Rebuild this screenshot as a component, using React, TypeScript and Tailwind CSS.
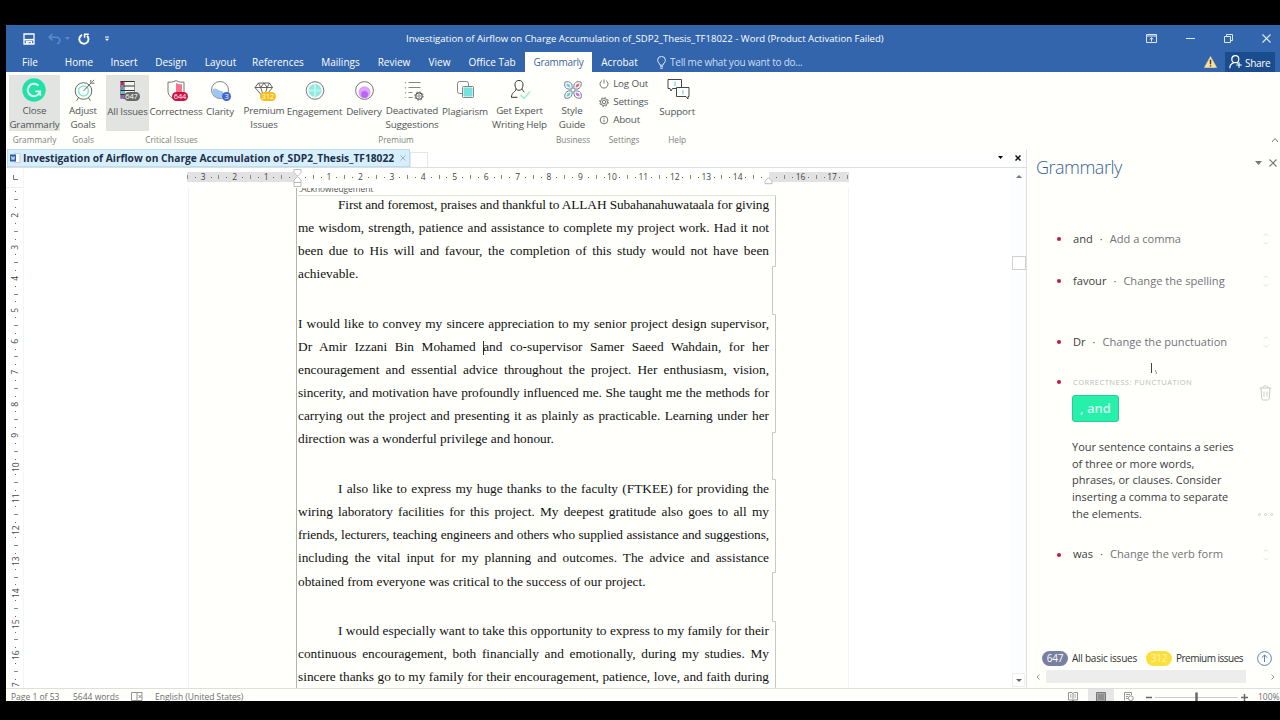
import type { ReactNode } from "react";
import { clsx } from "clsx";

const menuTabs = [
  { label: "File", width: "w-[48px]" },
  { label: "Home", width: "w-[50px]" },
  { label: "Insert", width: "w-[40px]" },
  { label: "Design", width: "w-[54px]" },
  { label: "Layout", width: "w-[45px]" },
  { label: "References", width: "w-[70px]" },
  { label: "Mailings", width: "w-[55px]" },
  { label: "Review", width: "w-[52px]" },
  { label: "View", width: "w-[39px]" },
  { label: "Office Tab", width: "w-[66px]" },
  { label: "Grammarly", width: "w-[67px]", active: true },
  { label: "Acrobat", width: "w-[55px]" },
];

// each paragraph is kept line by line, the way Word broke it
const paragraphs = [
  {
    indent: true,
    lines: [
      "First and foremost, praises and thankful to ALLAH Subahanahuwataala for giving",
      "me wisdom, strength, patience and assistance to complete my project work. Had it not",
      "been due to His will and favour, the completion of this study would not have been",
      "achievable.",
    ],
  },
  {
    indent: false,
    lines: [
      "I would like to convey my sincere appreciation to my senior project design supervisor,",
      "Dr Amir Izzani Bin Mohamed |and co-supervisor Samer Saeed Wahdain, for her",
      "encouragement and essential advice throughout the project. Her enthusiasm, vision,",
      "sincerity, and motivation have profoundly influenced me. She taught me the methods for",
      "carrying out the project and presenting it as plainly as practicable. Learning under her",
      "direction was a wonderful privilege and honour.",
    ],
  },
  {
    indent: true,
    lines: [
      "I also like to express my huge thanks to the faculty (FTKEE) for providing the",
      "wiring laboratory facilities for this project. My deepest gratitude also goes to all my",
      "friends, lecturers, teaching engineers and others who supplied assistance and suggestions,",
      "including the vital input for my planning and outcomes. The advice and assistance",
      "obtained from everyone was critical to the success of our project.",
    ],
  },
  {
    indent: true,
    open: true,
    lines: [
      "I would especially want to take this opportunity to express to my family for their",
      "continuous encouragement, both financially and emotionally, during my studies. My",
      "sincere thanks go to my family for their encouragement, patience, love, and faith during",
    ],
  },
];

const TitleBar = () => (
  <div className="relative flex h-[27px] items-center text-white">
    <svg className="ml-[17px]" width="12" height="12" viewBox="0 0 12 12" fill="none" stroke="white" strokeWidth="1.3">
      <path d="M1 1h10v10H1z" />
      <path d="M1 6.7h10" strokeWidth="1.6" />
      <path d="M3.5 11V8.6h5V11M5 9v2" />
    </svg>
    <svg className="ml-[13px]" width="13" height="12" viewBox="0 0 13 12" fill="none" stroke="#6288c6" strokeWidth="1.5">
      <path d="M4.5 1 1 4.2l3.5 3.2M1.3 4.2H8c5 0 5 5.6 1 6.6" />
    </svg>
    <svg className="ml-[4px]" width="5" height="3" viewBox="0 0 5 3" fill="#6288c6">
      <path d="M0 0h5L2.5 3z" />
    </svg>
    <svg className="ml-[7px]" width="13" height="12" viewBox="0 0 13 12" fill="none" stroke="white" strokeWidth="1.9">
      <path d="M5 1.9a4.6 4.6 0 1 0 5 .8" />
      <path d="M7.6 4.8V1.2h4.2" strokeWidth="1.6" />
    </svg>
    <svg className="ml-[15px]" width="4" height="6" viewBox="0 0 5 6" fill="white">
      <path d="M0 0h5v1.2H0zM0 2.8h5L2.5 5.6z" />
    </svg>
    <div className="absolute left-[400px] top-[6px] w-[480px] whitespace-nowrap text-[9.57px] leading-4">
      Investigation of Airflow on Charge Accumulation of_SDP2_Thesis_TF18022 - Word (Product Activation Failed)
    </div>
    <div className="ml-auto mr-[9px] flex items-center gap-[29px]">
      <svg width="11" height="9" viewBox="0 0 11 9" fill="none" stroke="#dbe9fb">
        <path d="M.5.5h10v8H.5zM.5 2h10" />
        <path d="M5.5 7.5V3.8M3.7 5.4l1.8-1.7 1.8 1.7" />
      </svg>
      <svg width="9" height="9" viewBox="0 0 9 9" stroke="#dbe9fb">
        <path d="M0 4.5h9" />
      </svg>
      <svg width="9" height="9" viewBox="0 0 9 9" fill="none" stroke="#dbe9fb">
        <path d="M.5 2.5h6v6h-6zM2.5 2.5v-2h6v6h-2" />
      </svg>
      <svg width="9" height="9" viewBox="0 0 9 9" stroke="#dbe9fb" strokeWidth="1.1">
        <path d="m.5.5 8 8M8.5.5l-8 8" />
      </svg>
    </div>
  </div>
);

const MenuBar = () => (
  <div className="flex h-5 items-stretch whitespace-nowrap text-[10px] leading-5 text-white">
    {menuTabs.map((tab) => (
      <div
        key={tab.label}
        className={clsx("flex justify-center", tab.width, tab.active && "bg-[#fffffc] tracking-[-0.3px] text-[#3f66a3]")}
      >
        {tab.label}
      </div>
    ))}
    <svg className="ml-[10px] mt-[4px]" width="9" height="13" viewBox="0 0 9 13" fill="none" stroke="#dbe9fb">
      <path d="M3 9.2C3 7.3.6 6.8.6 4.3a3.9 3.9 0 0 1 7.8 0C8.4 6.8 6 7.3 6 9.2zM3 10.8h3M3.4 12.3h2.2" />
    </svg>
    <span className="ml-[4px] tracking-[-0.23px] text-[#cfdff5]">Tell me what you want to do...</span>
    <svg className="ml-auto mt-[4px]" width="13" height="12" viewBox="0 0 13 12">
      <path d="M6.5.5 12.6 11.5H.4z" fill="#fbdf9b" stroke="#e9d9a5" strokeWidth=".6" />
      <path d="M6.5 3.8v4.4M6.5 9.2v1.2" stroke="#463a24" strokeWidth="1.4" />
    </svg>
    <div className="ml-[8px] mr-[5px] flex w-[50px] bg-[#1b4c8e]">
      <svg className="ml-[4px] mt-[3px]" width="14" height="14" viewBox="0 0 14 14" fill="none" stroke="white" strokeWidth="1.2">
        <circle cx="6.3" cy="4.2" r="3.5" />
        <path d="M.8 13.2c0-3 1.8-4.8 4.2-5.5M7.6 7.5l1.3 1M10 7.2v5.6M7.2 10h5.6" />
      </svg>
      <span className="ml-[2px] mt-px tracking-[-0.3px]">Share</span>
    </div>
  </div>
);

const Badge = ({ className, children }: { className: string; children: ReactNode }) => (
  <span
    className={clsx(
      "absolute flex h-[9px] items-center justify-center rounded-full text-[7.5px] leading-none text-white",
      className,
    )}
  >
    {children}
  </span>
);

type RibbonButtonProps = {
  width: string;
  label: string[];
  icon: ReactNode;
  pressed?: boolean;
};

const RibbonButton = ({ width, label, icon, pressed }: RibbonButtonProps) => (
  <div className={clsx("flex h-[56px] flex-col items-center", width, pressed && "bg-[#e1e4e1]")}>
    <div className="relative mt-[2px] flex h-[26px] w-[26px] items-center justify-center">{icon}</div>
    <div className="mt-[2px] text-center leading-[13.5px]">
      {label.map((line) => (
        <div key={line} className="flex justify-center whitespace-nowrap">
          {line}
        </div>
      ))}
    </div>
  </div>
);

const RibbonGroup = ({ caption, className, children }: { caption: string; className?: string; children: ReactNode }) => (
  <div className={clsx("flex flex-col", className)}>
    <div className="flex h-[56px]">{children}</div>
    <div className="mt-[3px] flex justify-center whitespace-nowrap text-[8.3px] leading-3 tracking-normal text-[#7d7f80]">
      {caption}
    </div>
  </div>
);

const CloseIcon = () => (
  <svg className="-ml-px" width="24" height="24" viewBox="0 0 24 24" fill="none">
    <circle cx="12" cy="12" r="11.7" fill="#25e0a6" />
    <path d="M16.4 7.6a6.2 6.2 0 1 0 1.5 6.2" stroke="#d8fff0" strokeWidth="2" />
    <path d="M13.3 13.4h5v4.4" stroke="#d8fff0" strokeWidth="1.8" />
  </svg>
);

const GoalsIcon = () => (
  <svg className="ml-px shrink-0" width="24" height="24" viewBox="0 0 24 24" fill="none" stroke="#555" strokeWidth=".9">
    <circle cx="11.5" cy="13" r="8.3" />
    <circle cx="11.5" cy="13" r="5" stroke="#8be8d6" strokeWidth="1.6" />
    <path d="m11.5 13 7.5-8M19 5l-.3-3M19 5l3.4.3M20.3 3.7 22 1.8M6.4 19.8l-1.8 3M16.6 19.8l1.8 3" />
  </svg>
);

const AllIssuesIcon = () => (
  <>
    <svg width="24" height="24" viewBox="0 0 24 24" fill="none">
      <path d="M4.5 3.5h14v17h-14z" stroke="#888" strokeWidth=".9" fill="#f4f4f4" />
      <path d="M4.5 3.5h14M4.5 8h14M4.5 12.5h14M4.5 16.5h14" stroke="#333" strokeWidth="1.2" />
      <path d="M8 3v18" stroke="#444" strokeWidth="1" />
      <path d="M5 4h2.6v3H5z" fill="#ce1550" />
      <path d="M5 9h2.6v3H5z" fill="#5b8fe0" />
      <path d="M5 13h2.6v3H5z" fill="#53d0bd" />
      <path d="M5 17h2.6v3H5z" fill="#a34fc9" />
    </svg>
    <Badge className="left-[9px] top-[15px] w-[16px] bg-[#686b6c]">647</Badge>
  </>
);

const CorrectnessIcon = () => (
  <>
    <svg width="24" height="24" viewBox="0 0 24 24" fill="none">
      <path d="M12 5c2.5 1.2 4.6 1.4 6 1.2v8.2c0 2.4-3 4.4-6 5.8z" fill="#f37593" />
      <path
        d="M12 2.6c3 1.7 5.6 1.7 8 1.5v9c0 5-4.2 7.2-8 9-3.8-1.8-8-4-8-9v-9c2.4.2 5 .2 8-1.5z"
        stroke="#666"
        strokeWidth=".9"
      />
    </svg>
    <Badge className="left-[9px] top-[15px] w-[16px] bg-[#d10f45]">644</Badge>
  </>
);

const ClarityIcon = () => (
  <>
    <svg width="24" height="24" viewBox="0 0 24 24" fill="none">
      <path d="M4.5 11.5c2.5-2.5 5 0 7 1s4 0 4 3.5c0 3-3 4-4.5 4a7.5 7.5 0 0 1-6.500-8.500z" fill="#9bc6f6" />
      <circle cx="12" cy="12" r="8.500" stroke="#777" strokeWidth=".9" />
    </svg>
    <Badge className="left-[15px] top-[15px] w-[9px] bg-[#3f66cf]">3</Badge>
  </>
);

const PremiumIcon = () => (
  <>
    <svg width="24" height="24" viewBox="0 0 24 24" fill="none" stroke="#555" strokeWidth=".9">
      <path d="M6.5 5h11l3 4.500L12 20 3 9.500zM3 9.500h17.500M6.500 5l2.200 4.500L12 5l3.200 4.500L17.500 5M8.700 9.500l3.300 10 3.200-10" />
    </svg>
    <Badge className="left-[9px] top-[15px] w-[16px] bg-[#f7bd16]">312</Badge>
  </>
);

const EngagementIcon = () => (
  <svg width="24" height="24" viewBox="0 0 24 24" fill="none">
    <circle cx="12" cy="12.5" r="6.5" fill="#8eeade" />
    <path d="M12 5.5v14M5 12.500h14" stroke="#b9f5ec" strokeWidth="2" />
    <circle cx="12" cy="12.5" r="8.8" stroke="#777" />
  </svg>
);

const DeliveryIcon = () => (
  <svg width="24" height="24" viewBox="0 0 24 24" fill="none">
    <circle cx="12.500" cy="14.300" r="6" fill="#dda4fa" />
    <circle cx="12.500" cy="16.500" r="3.500" fill="#be64f2" />
    <circle cx="12.500" cy="12.500" r="8.900" stroke="#666" strokeWidth=".9" />
  </svg>
);

const DeactivatedIcon = () => (
  <svg className="ml-[3px] shrink-0" width="24" height="24" viewBox="0 0 24 24" fill="none" stroke="#777" strokeWidth=".9">
    <path d="M6.5 4.5h12M6.5 9.5h12M6.5 14.5h4M6.5 19.5h4" />
    <path d="M3.5 4v16" stroke="#aaa" strokeWidth="1.4" strokeDasharray="1.5 3.5" />
    <circle cx="17" cy="18" r="3.2" stroke="#555" strokeWidth="1.2" />
    <circle cx="17" cy="18" r="4.2" stroke="#666" strokeDasharray="1.6 1.7" />
    <circle cx="17" cy="18" r="1.2" />
  </svg>
);

const PlagiarismIcon = () => (
  <svg className="ml-px" width="24" height="24" viewBox="0 0 24 24" fill="none" stroke="#777" strokeWidth=".9">
    <rect x="3.5" y="3.5" width="11" height="12" rx="2" />
    <rect x="8.5" y="8.5" width="11" height="11" rx="1" fill="#fff" />
    <path d="M9.5 9.500h9v9h-9z" fill="#74e3df" stroke="none" />
  </svg>
);

const ExpertIcon = () => (
  <svg width="24" height="24" viewBox="0 0 24 24" fill="none">
    <path
      d="M8.2 11C6.500 8 6 2.500 11 2.500S15.500 8 13.800 11c1 .8 1.500 2.500 2.600 3.200M8.200 11c1.600 1.800 4 1.700 5.600 0M8.200 11c-1 3.500-4.500 3-4.800 8.300h6"
      stroke="#333"
    />
    <path d="m12.500 17 3.600 3.500 6-7" stroke="#a6eedd" strokeWidth="1.8" />
  </svg>
);

const StyleIcon = () => (
  <svg className="ml-px" width="24" height="24" viewBox="0 0 24 24" fill="none" strokeWidth="1">
    <path d="M11 11C4 12 3 8 4 4c5-1 8 1 7 7z" stroke="#6a7d92" />
    <path d="M13 11c-1-7 3-8 7-7 1 4-1 8-7 7z" stroke="#6a7d92" />
    <path d="M11 13c1 6-3 8-7 7-1-4 1-8 7-7z" stroke="#6a7d92" />
    <path d="M13 13c7-1 8 3 7 7-4 1-8-1-7-7z" stroke="#6a7d92" />
    <path d="M9.500 9.500C6 9.500 5 7 5.500 5.500 8 5.500 9.500 7 9.500 9.500z" fill="#77c6ee" />
    <path d="M14.500 9.500c0-3.500 2.500-4.500 4-4 0 2.500-1.500 4-4 4z" fill="#ea6189" />
    <path d="M9.500 14.500c0 3.500-2.500 4.500-4 4 0-2.500 1.500-4 4-4z" fill="#62d7c8" />
    <path d="M14.500 14.500c3.500 0 4.500 2.500 4 4-2.500 0-4-1.500-4-4z" fill="#bd7aec" />
  </svg>
);

const SupportIcon = () => (
  <svg className="ml-[2px] shrink-0" width="24" height="24" viewBox="0 0 24 24" fill="#fff" stroke="#333" strokeWidth=".9">
    <path d="M2 1.5h13.500v9H6.500L5 13l-1-2.500H2z" />
    <path d="M10.500 9.500H23v9h-1V21l-2-2.500h-9.500z" />
    <path d="M9 3.500V8M16.800 12v4.500" stroke="#83e6d1" strokeWidth="1.4" />
  </svg>
);

const settingsItems = [
  {
    label: "Log Out",
    icon: <path d="M3 1.600a4 4 0 1 0 4 0M5 .5v4" />,
  },
  {
    label: "Settings",
    icon: (
      <>
        <circle cx="5" cy="5" r="1.7" />
        <circle cx="5" cy="5" r="3.5" />
        <circle cx="5" cy="5" r="4.4" strokeDasharray="1.7 1.75" />
      </>
    ),
  },
  {
    label: "About",
    icon: (
      <>
        <circle cx="5" cy="5" r="3.8" />
        <path d="M5 4.500v2.700M5 2.700v1" />
      </>
    ),
  },
];

const Ribbon = () => (
  <div className="flex h-[77px] bg-[#fffffc] pl-[3px] pt-[3px] text-[9.8px] tracking-[-0.15px] text-[#505356]">
    <RibbonGroup caption="Grammarly">
      <RibbonButton width="w-[51px]" label={["Close", "Grammarly"]} icon={<CloseIcon />} pressed />
    </RibbonGroup>
    <RibbonGroup caption="Goals" className="ml-[5px]">
      <RibbonButton width="w-[36px]" label={["Adjust", "Goals"]} icon={<GoalsIcon />} />
    </RibbonGroup>
    <RibbonGroup caption="Critical Issues" className="ml-[5px]">
      <RibbonButton width="w-[43px]" label={["All Issues"]} icon={<AllIssuesIcon />} pressed />
      <RibbonButton width="w-[54px]" label={["Correctness"]} icon={<CorrectnessIcon />} />
      <RibbonButton width="w-[34px]" label={["Clarity"]} icon={<ClarityIcon />} />
    </RibbonGroup>
    <RibbonGroup caption="Premium" className="ml-[6px]">
      <RibbonButton width="w-[42px]" label={["Premium", "Issues"]} icon={<PremiumIcon />} />
      <RibbonButton width="w-[59px]" label={["Engagement"]} icon={<EngagementIcon />} />
      <RibbonButton width="w-[40px]" label={["Delivery"]} icon={<DeliveryIcon />} />
      <RibbonButton width="w-[56px]" label={["Deactivated", "Suggestions"]} icon={<DeactivatedIcon />} />
      <RibbonButton width="w-[50px]" label={["Plagiarism"]} icon={<PlagiarismIcon />} />
      <RibbonButton width="w-[59px]" label={["Get Expert", "Writing Help"]} icon={<ExpertIcon />} />
    </RibbonGroup>
    <RibbonGroup caption="Business" className="ml-[7px]">
      <RibbonButton width="w-[32px]" label={["Style", "Guide"]} icon={<StyleIcon />} />
    </RibbonGroup>
    <RibbonGroup caption="Settings" className="ml-[9px]">
      <div className="flex w-[50px] flex-col">
        {settingsItems.map((item) => (
          <div key={item.label} className="flex h-[18px] items-center gap-[4px] whitespace-nowrap">
            <svg className="shrink-0" width="10" height="10" viewBox="0 0 10 10" fill="none" stroke="#666" strokeWidth=".9">
              {item.icon}
            </svg>
            {item.label}
          </div>
        ))}
      </div>
    </RibbonGroup>
    <RibbonGroup caption="Help" className="ml-[10px]">
      <RibbonButton width="w-[36px]" label={["Support"]} icon={<SupportIcon />} />
    </RibbonGroup>
    <svg className="ml-auto mr-px mt-[62px]" width="8" height="6" viewBox="0 0 8 6" fill="none" stroke="#777">
      <path d="m1 5 3-3.500L7 5" />
    </svg>
  </div>
);

const DocumentTabs = () => (
  <div className="flex h-[19px] shrink-0 items-stretch border-b border-[#dcdfe2] bg-white">
    <div className="ml-px flex w-[403px] items-center border border-[#bcdcf0] bg-[#d7effc]">
      <svg className="ml-[2px] shrink-0" width="11" height="10" viewBox="0 0 11 10">
        <path d="M4.500.5h5.500v9H4.500z" fill="#fff" stroke="#b9c3cf" strokeWidth=".8" />
        <path d="M0 1.500h6v7H0z" fill="#2b5fa8" />
        <path d="m1.300 3.300.8 3.400.9-3 .9 3 .8-3.400" fill="none" stroke="#fff" strokeWidth=".7" />
      </svg>
      <span className="ml-[2px] w-[373px] whitespace-nowrap text-[10.22px] font-bold leading-4 text-[#1c2f49]">
        Investigation of Airflow on Charge Accumulation of_SDP2_Thesis_TF18022
      </span>
      <svg className="ml-[4px]" width="6" height="6" viewBox="0 0 6 6" stroke="#9fb0bf">
        <path d="m.5.5 5 5M5.500.5l-5 5" />
      </svg>
    </div>
    <div className="mt-[3px] w-[18px] border border-b-0 border-[#e6e6e6]" />
    <svg className="ml-auto mt-[7px]" width="5" height="3" viewBox="0 0 5 3">
      <path d="M0 0h5L2.500 3z" />
    </svg>
    <svg className="ml-[12px] mr-[5px] mt-[6px]" width="6" height="6" viewBox="0 0 6 6" stroke="#111" strokeWidth="1.5">
      <path d="m.5.5 5 5M5.500.5l-5 5" />
    </svg>
  </div>
);

// quarter-centimetre marks: number, dot, half tick, dot
const Mark = ({ quarter, vertical }: { quarter: number; vertical?: boolean }) => {
  const step = ((quarter % 4) + 4) % 4;
  if (step === 0) {
    const value = Math.abs(quarter / 4);
    const hidden = !vertical && (value === 0 || value === 15);
    return <span className={clsx(vertical && "-rotate-90")}>{hidden ? "" : value}</span>;
  }
  if (step === 2) {
    return <span className={clsx("bg-[#888]", vertical ? "h-px w-[4px]" : "h-[4px] w-px")} />;
  }
  return <span className="h-px w-px bg-[#666]" />;
};

const HorizontalRuler = () => (
  <div className="relative h-[20px] shrink-0">
    <div className="ml-[181px] flex h-[18px] w-[662px] items-center">
      <div className="h-[10px] w-[110px] bg-[#e2e2e2]" />
      <div className="h-[10px] w-[472px] bg-[#fffffc]" />
      <div className="h-[10px] w-[80px] bg-[#e2e2e2]" />
    </div>
    <div className="absolute left-[177.6px] top-0 flex h-[18px] text-[8.5px] text-[#444]">
      {Array.from({ length: 85 }, (_, i) => (
        <div key={i} className="flex w-[7.867px] shrink-0 items-center justify-center">
          <Mark quarter={i - 14} />
        </div>
      ))}
    </div>
    <svg className="absolute left-[287px] top-px" width="9" height="18" viewBox="0 0 9 18" fill="#fff" stroke="#b5b5b5" strokeWidth=".9">
      <path d="M1 .5h7v3L4.500 7 1 3.500zM4.500 7.500 8 11v2.500H1V11zM1 13.500h7v4H1z" />
    </svg>
    <svg className="absolute left-[758px] top-[9px]" width="9" height="8" viewBox="0 0 9 8" fill="#fff" stroke="#b5b5b5" strokeWidth=".9">
      <path d="M4.500.7 8 4.200v2.500H1V4.200z" />
    </svg>
  </div>
);

const VerticalRuler = () => (
  <div className="flex w-[18px] shrink-0 flex-col overflow-hidden border-r border-[#f6f6f6]">
    <div className="flex h-[20px] shrink-0 items-center justify-center border-b border-[#ededed] text-[#777]">
      <svg className="ml-[2px]" width="5" height="5" viewBox="0 0 5 5" stroke="#777" fill="none">
        <path d="M.5 0v4.500H5" />
      </svg>
    </div>
    <div className="flex flex-col text-[8.5px] text-[#444]">
      {Array.from({ length: 64 }, (_, i) => (
        <div key={i} className="ml-[2px] flex h-[7.867px] shrink-0 items-center justify-center leading-none">
          <Mark quarter={i + 5} vertical />
        </div>
      ))}
    </div>
  </div>
);

// lines that Word squeezed to fit the measure
const tightLines = ["First and foremost", "friends, lecturers", "sincerity, and"];

const DocumentLine = ({ text, indent, last }: { text: string; indent: boolean; last: boolean }) => {
  const [before, after] = text.split("|");
  return (
    <div
      className={clsx(
        "h-[23.1px] whitespace-nowrap leading-[23.1px]",
        indent && "pl-[40px]",
        tightLines.some((start) => text.startsWith(start)) && "tracking-[-0.1px]",
        !last && "[text-align-last:justify]",
      )}
    >
      {before}
      {after && <span className="-mr-px inline-block h-[14px] w-px bg-[#333] align-middle" />}
      {after}
    </div>
  );
};

const Page = () => (
  <div className="relative ml-[164px] h-full w-[661px] border-x border-[#f3f3f3] bg-[#fffffc]">
    <div className="h-[7px] overflow-hidden pl-[110px] text-[8.4px] leading-none text-[#555]">
      <div className="mt-[-3px]">:Acknowledgement</div>
    </div>
    <div className="ml-[109px] mt-[-2px] w-[471px] font-['Liberation_Serif',serif] text-[13.33px] text-[#111]">
      {paragraphs.map((paragraph) => (
        <div key={paragraph.lines[0]} className="mb-[26.6px]">
          {paragraph.lines.map((line, i) => (
            <DocumentLine
              key={line}
              text={line}
              indent={paragraph.indent && i === 0}
              last={!paragraph.open && i === paragraph.lines.length - 1}
            />
          ))}
        </div>
      ))}
    </div>
    {/* text boundary, notched between paragraphs */}
    <svg className="absolute left-[107px] top-0" width="482" height="501" viewBox="0 0 482 501" fill="none">
      <path d="M.5 0v501" stroke="#b4b4b4" />
      <path d="M.5 7.500h479" stroke="#e0e0e0" />
      <path d="M479.500 7.500v71h-3v48h3v118h-3v47h3v93h-3v49h3v68" stroke="#c8c8c8" />
    </svg>
  </div>
);

const ScrollBar = () => (
  <div className="flex w-[15px] shrink-0 flex-col items-center bg-[#fbfdfe]">
    <svg className="mt-[7px]" width="6" height="3" viewBox="0 0 6 3" fill="#777">
      <path d="M0 3h6L3 0z" />
    </svg>
    <div className="ml-px mt-[78px] h-[14px] w-[14px] border border-[#d0d0d0] bg-white" />
    <div className="mt-auto flex h-[14px] w-[13px] items-center justify-center border border-[#eee] bg-white">
      <svg width="6" height="3" viewBox="0 0 6 3" fill="#666">
        <path d="M0 0h6L3 3z" />
      </svg>
    </div>
    <div className="h-px" />
  </div>
);

const Suggestion = ({ word, hint, className }: { word: string; hint: string; className: string }) => (
  <div className={clsx("flex h-4 items-center whitespace-nowrap text-[11.1px]", className)}>
    <span className="ml-[30px] h-[4px] w-[4px] rounded-full bg-[#c2164e]" />
    <span className="ml-[12px] text-[#3b3d42]">{word}</span>
    <span className="mx-[7px] text-[#555]">·</span>
    <span className="text-[#707378]">{hint}</span>
    <svg className="ml-auto mr-[11px]" width="6" height="12" viewBox="0 0 6 12" fill="none" stroke="#e2e2e2">
      <path d="M.5 3 3 .8 5.500 3M.5 9 3 11.200 5.500 9" />
    </svg>
  </div>
);

const GrammarlyPanel = () => (
  <div className="relative flex w-[254px] shrink-0 flex-col border-l border-[#dfe2e5] bg-[#fffffc]">
    <div className="flex h-[36px] items-center">
      <h2 className="ml-[9px] text-[18px] font-light tracking-[-0.5px] text-[#375f96]">Grammarly</h2>
      <svg className="mb-[8px] ml-auto" width="7" height="4" viewBox="0 0 7 4" fill="#777">
        <path d="M0 0h7L3.500 4z" />
      </svg>
      <svg className="mb-[8px] ml-[7px] mr-[3px]" width="8" height="8" viewBox="0 0 8 8" stroke="#777" strokeWidth="1.2">
        <path d="m.5.5 7 7M7.500.5l-7 7" />
      </svg>
    </div>
    <Suggestion word="and" hint="Add a comma" className="mt-[46px]" />
    <Suggestion word="favour" hint="Change the spelling" className="mt-[26px]" />
    <Suggestion word="Dr" hint="Change the punctuation" className="mt-[45px]" />
    <div className="mt-[26px] flex h-[12px] items-center">
      <span className="ml-[30px] h-[4px] w-[4px] rounded-full bg-[#c2164e]" />
      <span className="ml-[12px] mt-px whitespace-nowrap text-[7.5px] tracking-[0.5px] text-[#b9bbbd]">
        CORRECTNESS: PUNCTUATION
      </span>
    </div>
    <div className="flex">
      <button className="ml-[45px] mt-[7px] h-[27px] w-[47px] rounded-[3px] border border-[#23cf96] bg-[#27f0ab] text-[13px] font-semibold leading-none text-[#d2fff0]">
        , and
      </button>
      <svg className="ml-auto mr-[8px] mt-[-3px]" width="13" height="16" viewBox="0 0 13 16" fill="none" stroke="#c9c9c9">
        <path d="M.5 3h12M4 3c0-3 5-3 5 0M2 3l.8 10.500c.1 1 .7 1.500 1.500 1.500h4.400c.8 0 1.400-.5 1.500-1.500L11 3M5 6.500v5M8 6.500v5" />
      </svg>
    </div>
    <div className="mt-[17px] flex items-end">
      <p className="ml-[45px] w-[170px] whitespace-nowrap text-[11px] leading-[16.7px] text-[#3b3d41]">
        Your sentence contains a series
        <br />
        of three or more words,
        <br />
        phrases, or clauses. Consider
        <br />
        inserting a comma to separate
        <br />
        the elements.
      </p>
      <div className="mb-[7px] ml-auto mr-[7px] flex gap-[3px]">
        <span className="h-[3px] w-[3px] rounded-full border border-[#ccc]" />
        <span className="h-[3px] w-[3px] rounded-full border border-[#ccc]" />
        <span className="h-[3px] w-[3px] rounded-full border border-[#ccc]" />
      </div>
    </div>
    <Suggestion word="was" hint="Change the verb form" className="mt-[24px]" />
    <div className="mt-auto flex h-[16px] items-center whitespace-nowrap text-[10px] tracking-[-0.25px] text-[#2f3135]">
      <span className="ml-[15px] flex h-[15px] w-[26px] items-center justify-center rounded-full bg-[#7780a0] text-white">647</span>
      <span className="ml-[4px] w-[66px]">All basic issues</span>
      <span className="ml-[8px] flex h-[15px] w-[26px] items-center justify-center rounded-full bg-[#fbdf3c] text-[#fff7ae]">312</span>
      <span className="ml-[4px] w-[68px] tracking-[-0.5px]">Premium issues</span>
      <svg className="ml-auto mr-[8px]" width="15" height="15" viewBox="0 0 15 15" fill="none" stroke="#5b83b8">
        <circle cx="7.5" cy="7.5" r="6.9" />
        <path d="M7.500 11V4M4.800 6.700 7.500 4l2.700 2.700" />
      </svg>
    </div>
    <div className="mb-[5px] mt-[4px] flex h-[13px] items-center">
      <svg className="ml-[9px]" width="4" height="6" viewBox="0 0 4 6" fill="none" stroke="#999">
        <path d="M3.500.5 1 3l2.500 2.500" />
      </svg>
      <div className="ml-[6px] h-[13px] w-[200px] bg-[#ededed]" />
      <svg className="ml-auto mr-[5px]" width="4" height="6" viewBox="0 0 4 6" fill="none" stroke="#999">
        <path d="M.5.5 3 3 .5 5.500" />
      </svg>
    </div>
    {/* text pointer */}
    <svg className="absolute left-[123px] top-[214px]" width="9" height="12" viewBox="0 0 9 12" fill="none" stroke="#444">
      <path d="M1.500 0v10" />
      <path d="M5.500 7v1.500l1 .5-.5 2" stroke="#999" />
    </svg>
  </div>
);

const StatusBar = () => (
  <div className="flex h-[13px] overflow-hidden whitespace-nowrap border-t border-[#dedede] bg-[#fffffc] text-[8.5px] leading-4 text-[#6a6c6e]">
    <span className="ml-[5px] w-[62px]">Page 1 of 53</span>
    <span className="w-[58px]">5644 words</span>
    <svg className="mt-[3px]" width="12" height="9" viewBox="0 0 12 9" fill="none" stroke="#888" strokeWidth=".9">
      <path d="M.5.5H6v8H.5zM6 .5h5v8H6M7.500 3l3 3M10.500 3l-3 3" />
    </svg>
    <span className="ml-[12px]">English (United States)</span>
    <svg className="ml-auto mt-[3px]" width="10" height="9" viewBox="0 0 10 9" fill="none" stroke="#888" strokeWidth=".9">
      <path d="M.5.5H4l1 1 1-1h3.500V8H6L5 9 4 8H.5zM5 1v8M2 3h1.500M2 5h1.500M6.500 3H8M6.500 5H8" />
    </svg>
    <div className="ml-[10px] flex w-[26px] justify-center bg-[#e6e6e6]">
      <svg className="mt-[3px]" width="10" height="10" viewBox="0 0 10 10" fill="#aaa" stroke="#777">
        <path d="M.5.5h9v9h-9zM2 3h6M2 5h6M2 7h6" />
      </svg>
    </div>
    <svg className="ml-[10px] mt-[3px]" width="10" height="9" viewBox="0 0 10 9" fill="none" stroke="#888" strokeWidth=".9">
      <path d="M.5 8.500v-8h7V3M2 2.500h4M2 4.500h2M2 6.500h2" />
      <circle cx="6.8" cy="6.2" r="2.4" />
    </svg>
    <svg className="ml-[12px] mt-[3px]" width="103" height="10" viewBox="0 0 103 10" stroke="#666">
      <path d="M0 5.500h6" strokeWidth="1.5" />
      <path d="M9 5.500h83" stroke="#ccc" />
      <path d="M50.500.5v9" strokeWidth="2.5" />
      <path d="M95 5.500h7M98.500 2v7" strokeWidth="1.5" />
    </svg>
    <span className="ml-[9px] w-[22px]">100%</span>
  </div>
);

const App = () => (
  <div className="h-[720px] w-[1280px] overflow-hidden bg-black pl-[6px] pt-[25px] font-['Open_Sans','Noto_Sans',sans-serif]">
    <div className="flex h-[676px] w-[1274px] flex-col bg-[#fffffc]">
      <div className="bg-[#3265ac]">
        <TitleBar />
        <MenuBar />
      </div>
      <Ribbon />
      <div className="flex h-[539px] shrink-0">
        <div className="flex w-[1020px] shrink-0 flex-col bg-white">
          <DocumentTabs />
          <div className="flex h-[520px]">
            <VerticalRuler />
            <div className="flex w-[987px] shrink-0 flex-col">
              <div className="-ml-[18px]">
                <HorizontalRuler />
              </div>
              <div className="h-[500px] overflow-hidden">
                <Page />
              </div>
            </div>
            <ScrollBar />
          </div>
        </div>
        <GrammarlyPanel />
      </div>
      <StatusBar />
    </div>
  </div>
);

export default App;
